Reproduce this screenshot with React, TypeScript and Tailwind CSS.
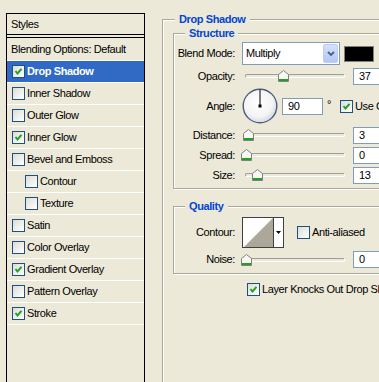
import React from 'react';

type StyleItem = { name: string; checked: boolean; indent?: boolean; active?: boolean };

const styleItems: StyleItem[] = [
  { name: 'Drop Shadow', checked: true, active: true },
  { name: 'Inner Shadow', checked: false },
  { name: 'Outer Glow', checked: false },
  { name: 'Inner Glow', checked: true },
  { name: 'Bevel and Emboss', checked: false },
  { name: 'Contour', checked: false, indent: true },
  { name: 'Texture', checked: false, indent: true },
  { name: 'Satin', checked: false },
  { name: 'Color Overlay', checked: false },
  { name: 'Gradient Overlay', checked: true },
  { name: 'Pattern Overlay', checked: false },
  { name: 'Stroke', checked: true },
];

function Check({ checked }: { checked: boolean }) {
  return (
    <span className="inline-flex h-[13px] w-[13px] shrink-0 items-center justify-center border border-[#1C5180] bg-[linear-gradient(135deg,#DCDCD7,#FFFFFF)]">
      {checked && (
        <svg width="11" height="11" viewBox="0 0 11 11">
          <path d="M2.5 5 L4.5 7.5 L8.5 2.8" fill="none" stroke="#21A121" strokeWidth="2" />
        </svg>
      )}
    </span>
  );
}

function Thumb({ left }: { left: number }) {
  return (
    <svg className="absolute top-[1px]" style={{ left }} width="11" height="12" viewBox="0 0 11 12">
      <path d="M0.5 11.5 V4.5 L5.5 0.5 L10.5 4.5 V11.5 Z" fill="#F7F7F4" stroke="#808080" />
      <rect x="1" y="9" width="9" height="2" fill="#21A121" />
    </svg>
  );
}

function Slider({ pos }: { pos: number }) {
  // pos = thumb centre, px from slider start
  return (
    <div className="relative h-[14px] w-[106px] shrink-0">
      <div className="absolute left-[3px] right-[3px] top-[5px] h-[4px] rounded-full border border-[#9D9DA1] border-b-white border-r-white" />
      <Thumb left={pos - 5} />
    </div>
  );
}

function NumBox({ value, w = 'w-[40px]' }: { value: string; w?: string }) {
  return (
    <div className={`flex h-[17px] ${w} shrink-0 items-center border border-[#7F9DB9] bg-white pl-[5px]`}>
      {value}
    </div>
  );
}

function Label({ children }: { children: React.ReactNode }) {
  return <div className="flex w-[62px] shrink-0 justify-end whitespace-nowrap pr-[1px]">{children}</div>;
}

function SliderRow({ label, value, pos }: { label: string; value: string; pos: number }) {
  return (
    <div className="flex h-[20px] items-center">
      <Label>{label}</Label>
      <div className="ml-[6px]">
        <Slider pos={pos} />
      </div>
      <div className="ml-[5px]">
        <NumBox value={value} />
      </div>
    </div>
  );
}

function Dial() {
  return (
    <svg width="36" height="36" viewBox="0 0 36 36" className="shrink-0">
      <defs>
        <radialGradient id="dialFill" cx="45%" cy="40%" r="60%">
          <stop offset="0%" stopColor="#FFFFFF" />
          <stop offset="70%" stopColor="#F4F4F6" />
          <stop offset="100%" stopColor="#D6D8E2" />
        </radialGradient>
      </defs>
      <circle cx="18" cy="18" r="16.8" fill="url(#dialFill)" stroke="#4E5D7E" strokeWidth="1.4" />
      <line x1="18" y1="1.5" x2="18" y2="18" stroke="#000" strokeWidth="1" />
      <rect x="16.5" y="16.5" width="3" height="3" fill="#000" />
    </svg>
  );
}

const groupBox =
  'border border-[#ACA899] shadow-[inset_1px_1px_0_#fff,1px_1px_0_#fff]';

export default function App() {
  return (
    <div className="flex h-[382px] w-[379px] overflow-hidden bg-[#ECE9D8] font-['Liberation_Sans',Arial,sans-serif] text-[11px] leading-[13px] tracking-[-0.4px] text-black">
      {/* Styles list */}
      <div className="ml-[6px] mt-[13px] h-[400px] w-[139px] shrink-0 border border-black">
        <div className="flex h-[21px] items-center border-b border-black pl-[4px]">Styles</div>
        <div className="mt-[2px] flex h-[24px] items-center whitespace-nowrap border-y border-t-black border-b-white pl-[4px]">
          Blending Options: Default
        </div>
        {styleItems.map((s) => (
          <div
            key={s.name}
            className={`flex h-[22px] items-center gap-[2px] border-b border-white ${
              s.indent ? 'pl-[18px]' : 'pl-[5px]'
            } ${s.active ? 'bg-[#316AC5] font-bold text-white' : ''}`}
          >
            <Check checked={s.checked} />
            <span className="whitespace-nowrap">{s.name}</span>
          </div>
        ))}
      </div>

      {/* Drop Shadow settings */}
      <fieldset className={`ml-[17px] mt-[13px] h-[400px] w-[260px] shrink-0 pl-[10px] pt-[1px] ${groupBox}`}>
        <legend className="ml-[2px] bg-[#ECE9D8] px-[4px] font-bold text-[#0046D5]">Drop Shadow</legend>

        <fieldset className={`w-[240px] pb-[3px] pt-[2px] ${groupBox}`}>
          <legend className="ml-[11px] bg-[#ECE9D8] px-[4px] font-bold text-[#0046D5]">Structure</legend>

          <div className="flex h-[23px] items-center">
            <Label>Blend Mode:</Label>
            <div className="ml-[6px] flex h-[23px] w-[98px] shrink-0 items-center border border-[#7F9DB9] bg-white">
              <span className="flex-1 pl-[3px]">Multiply</span>
              <div className="m-[1px] flex w-[15px] items-center justify-center self-stretch rounded-[2px] border border-[#BCCCF4] bg-[linear-gradient(#D5E0FB,#B4C7F5)]">
                <svg width="8" height="6" viewBox="0 0 8 6">
                  <path d="M1 1 L4 4 L7 1" fill="none" stroke="#4D6185" strokeWidth="1.8" />
                </svg>
              </div>
            </div>
            <div className="ml-[4px] h-[16px] w-[30px] shrink-0 border border-[#808080] bg-black" />
          </div>

          <div className="flex h-[22px] items-center">
            <Label>Opacity:</Label>
            <div className="ml-[6px]">
              <Slider pos={41} />
            </div>
            <div className="ml-[5px]">
              <NumBox value="37" />
            </div>
          </div>

          <div className="flex h-[38px] items-center">
            <Label>Angle:</Label>
            <div className="ml-[6px]">
              <Dial />
            </div>
            <div className="ml-[4px]">
              <NumBox value="90" w="w-[41px]" />
            </div>
            <span className="ml-[4px] self-start pt-[11px]">°</span>
            <div className="ml-[9px] flex items-center gap-[2px] whitespace-nowrap">
              <Check checked />
              <span>Use Global Light</span>
            </div>
          </div>

          <SliderRow label="Distance:" value="3" pos={6} />
          <SliderRow label="Spread:" value="0" pos={4} />
          <SliderRow label="Size:" value="13" pos={15} />
        </fieldset>

        <fieldset className={`mt-[11px] w-[240px] pb-[3px] pt-[2px] ${groupBox}`}>
          <legend className="ml-[11px] bg-[#ECE9D8] px-[4px] font-bold text-[#0046D5]">Quality</legend>

          <div className="flex h-[34px] items-center">
            <Label>Contour:</Label>
            <div className="ml-[6px] flex h-[31px] w-[42px] shrink-0 border border-[#404040] bg-white">
              <svg width="29" height="29" viewBox="0 0 29 29" className="ml-[1px] shrink-0">
                <rect width="29" height="29" fill="#FFFFFF" />
                <polygon points="0,29 29,0 29,29" fill="#ACA899" />
              </svg>
              <div className="flex flex-1 items-center justify-center border-l border-[#404040]">
                <svg width="5" height="3" viewBox="0 0 5 3">
                  <polygon points="0,0 5,0 2.5,3" fill="#000" />
                </svg>
              </div>
            </div>
            <div className="ml-[13px] flex items-center gap-[2px]">
              <Check checked={false} />
              <span>Anti-aliased</span>
            </div>
          </div>

          <div className="flex h-[21px] items-center">
            <Label>Noise:</Label>
            <div className="ml-[6px]">
              <Slider pos={4} />
            </div>
            <div className="ml-[5px]">
              <NumBox value="0" />
            </div>
          </div>
        </fieldset>

        <div className="ml-[74px] mt-[9px] flex h-[13px] items-center gap-[2px] whitespace-nowrap">
          <Check checked />
          <span>Layer Knocks Out Drop Shadow</span>
        </div>
      </fieldset>
    </div>
  );
}
